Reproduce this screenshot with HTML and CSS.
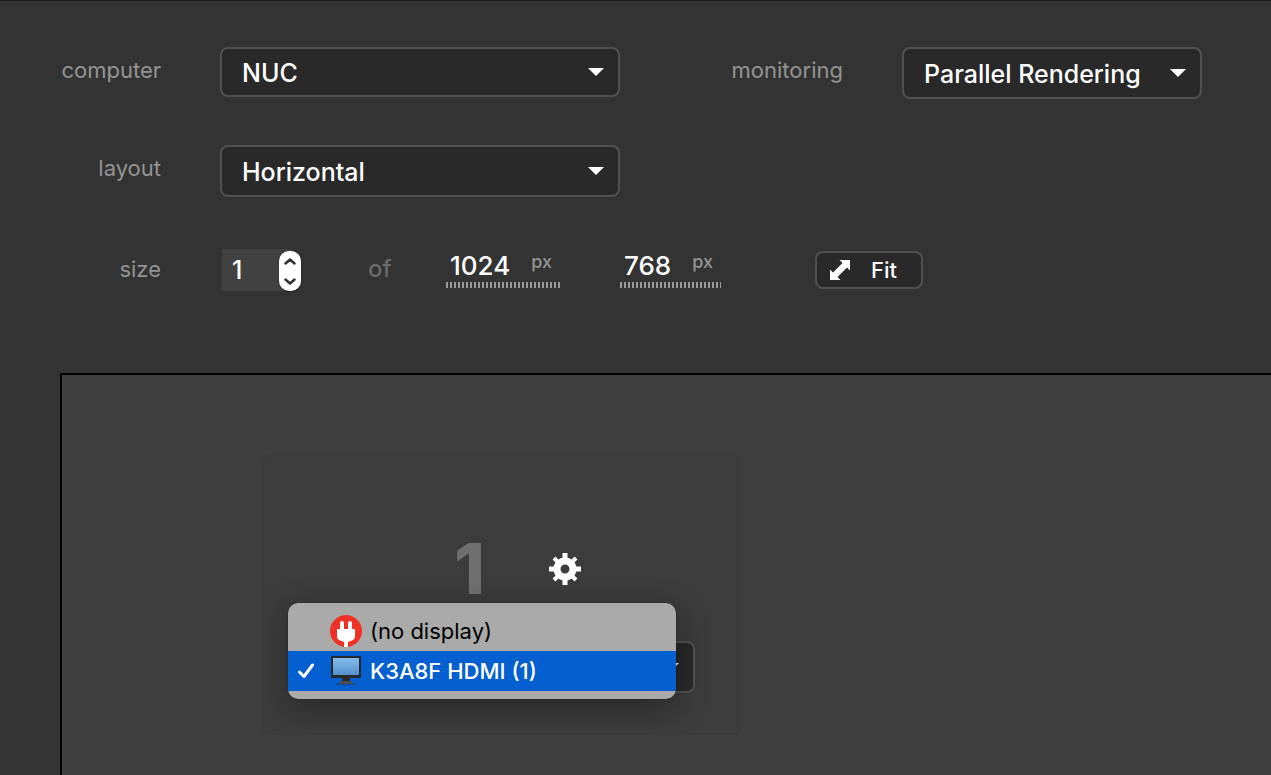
FILE: index.html
```html
<!DOCTYPE html>
<html lang="en">
<head>
<meta charset="utf-8">
<meta name="viewport" content="width=device-width, initial-scale=1">
<title>Display setup</title>
<link rel="stylesheet" href="styles.css">
</head>
<body>
<main class="page">
  <form class="settings">
    <div class="row">
      <label class="label" for="computer">computer</label>
      <div class="select select-wide select-short">
        <select id="computer"><option>NUC</option></select>
        <svg class="arrow" viewBox="0 0 16 8" aria-hidden="true"><path d="M0 0h16L8 8z"/></svg>
      </div>
      <label class="label label-second" for="monitoring">monitoring</label>
      <div class="select select-medium">
        <select id="monitoring"><option>Parallel Rendering</option></select>
        <svg class="arrow" viewBox="0 0 16 8" aria-hidden="true"><path d="M0 0h16L8 8z"/></svg>
      </div>
    </div>
    <div class="row">
      <label class="label" for="layout">layout</label>
      <div class="select select-wide">
        <select id="layout"><option>Horizontal</option></select>
        <svg class="arrow" viewBox="0 0 16 8" aria-hidden="true"><path d="M0 0h16L8 8z"/></svg>
      </div>
    </div>
    <div class="row row-size">
      <label class="label" for="count">size</label>
      <div class="stepper">
        <input id="count" type="number" value="1" min="1">
        <div class="spin">
          <button type="button" aria-label="Increase"><svg viewBox="0 0 12 7" aria-hidden="true"><path d="M1.500 5.500L6 1.500l4.500 4"/></svg></button>
          <button type="button" aria-label="Decrease"><svg viewBox="0 0 12 7" aria-hidden="true"><path d="M1.500 1.500L6 5.500l4.500-4"/></svg></button>
        </div>
      </div>
      <span class="of">of</span>
      <div class="measure measure-width">
        <input id="width" type="text" value="1024" aria-label="Width">
        <label for="width">px</label>
      </div>
      <div class="measure measure-height">
        <input id="height" type="text" value="768" aria-label="Height">
        <label for="height">px</label>
      </div>
      <button class="fit" type="button">
        <svg viewBox="0 0 22 22" aria-hidden="true"><path d="M10.500 1H21v10.500l-3-3L8.500 18l3 3H1V10.500l3 3L13.500 4z"/></svg>
        <span>Fit</span>
      </button>
    </div>
  </form>
  <section class="stage" aria-label="Displays">
    <article class="card">
      <header class="card-head">
        <span class="card-number">1</span>
        <button class="gear" type="button" aria-label="Display settings">
          <svg viewBox="-16 -16 32 32" aria-hidden="true">
            <path class="teeth" d="M0-16V-9M0 9v7M-16 0h7M9 0h7"/>
            <path class="teeth-diagonal" d="M-11-11l4 4M11 11l-4-4M-11 11l4-4M11-11l-4 4"/>
            <circle class="ring" r="8"/>
          </svg>
        </button>
      </header>
      <div class="select select-output">
        <select id="output" aria-label="Output"><option></option></select>
        <svg class="arrow" viewBox="0 0 16 8" aria-hidden="true"><path d="M0 0h16L8 8z"/></svg>
        <ul class="menu" role="listbox" aria-label="Output">
          <li class="option" role="option" aria-selected="false">
            <span class="tick"></span>
            <svg class="option-icon" viewBox="0 0 32 32" aria-hidden="true">
              <circle cx="16" cy="16" r="16" fill="#ee3124"/>
              <path fill="#fff" d="M10 14V8a2 2 0 0 1 4 0v6h4V8a2 2 0 0 1 4 0v6h3v8q0 2-3 3.500l-4 1.500V32h-4v-5L10 25.500Q7 24 7 22v-8z"/>
            </svg>
            <span>(no display)</span>
          </li>
          <li class="option option-selected" role="option" aria-selected="true">
            <span class="tick"><svg viewBox="0 0 16 16" aria-hidden="true"><path d="M1.500 9L6 13.500 14.500 2"/></svg></span>
            <svg class="option-icon" viewBox="0 0 32 32" aria-hidden="true">
              <defs><linearGradient id="screen" x2="0" y2="1"><stop stop-color="#86bcec"/><stop offset="1" stop-color="#5590cc"/></linearGradient></defs>
              <ellipse cx="16" cy="29" rx="11" ry="1.500" fill="#0b4ba3"/>
              <path d="M12 22h8v5h-8z" fill="#26282b"/>
              <path d="M11 26h10l3 3H8z" fill="#4a4d51"/>
              <rect x="1" y="1" width="30" height="22" rx="1" fill="#25282b"/>
              <rect x="3" y="3" width="26" height="17" fill="url(#screen)"/>
            </svg>
            <span>K3A8F HDMI (1)</span>
          </li>
        </ul>
      </div>
    </article>
  </section>
</main>
</body>
</html>
```
FILE: styles.css
```css
* {
  box-sizing: border-box;
}

body {
  margin: 0;
  background: #333;
  color: #fff;
  font-family: Inter, "Liberation Sans", sans-serif;
  font-size: 25px;
  font-weight: 500;
}

input,
select,
button {
  margin: 0;
  font: inherit;
  color: inherit;
}

.page {
  display: flex;
  flex-direction: column;
  min-height: 100vh;
  border-top: 1px solid #1a1a1a;
}

.settings {
  display: flex;
  flex-direction: column;
  gap: 46px;
  padding: 46px 60px 82px 0;
}

.row {
  display: flex;
  align-items: center;
}

.label {
  flex: none;
  width: 161px;
  margin-right: 59px;
  padding-bottom: 6px;
  color: #949494;
  font-size: 22px;
  font-weight: 400;
  line-height: 28px;
  text-align: right;
}

.label-second {
  width: 223px;
}

.select {
  position: relative;
}

.select select {
  display: block;
  width: 100%;
  height: 52px;
  padding: 2px 48px 0 20px;
  border: 2px solid #515151;
  border-radius: 8px;
  background: #292929;
  appearance: none;
}

.select-short {
  align-self: flex-start;
}

.select-short select {
  height: 50px;
}

.select-wide {
  width: 400px;
}

.select-medium {
  width: 300px;
}

.arrow {
  position: absolute;
  top: calc(50% - 4px);
  right: 16px;
  width: 16px;
  height: 8px;
  fill: #fff;
  pointer-events: none;
}

.row-size {
  padding-top: 6px;
}

.row-size .label {
  padding-bottom: 2px;
}

.stepper {
  position: relative;
  width: 79px;
  margin-left: 2px;
}

.stepper input {
  display: block;
  width: 70px;
  height: 42px;
  padding: 0 10px;
  border: 0;
  background: #414141;
  appearance: textfield;
}

.stepper input::-webkit-inner-spin-button {
  display: none;
}

.spin {
  position: absolute;
  top: 2px;
  right: 0;
  display: flex;
  flex-direction: column;
  width: 22px;
  height: 40px;
  border-radius: 10px;
  background: #fff;
  box-shadow: 0 1px 2px rgb(0 0 0 / 40%);
}

.spin button {
  display: flex;
  flex: 1;
  align-items: center;
  justify-content: center;
  padding: 0;
  border: 0;
  background: none;
}

.spin svg {
  width: 12px;
  height: 7px;
  fill: none;
  stroke: #333;
  stroke-width: 2.5;
  stroke-linecap: round;
  stroke-linejoin: round;
}

.of {
  width: 78px;
  margin-left: 67px;
  padding-bottom: 4px;
  color: #6b6b6b;
  font-size: 24px;
}

.measure {
  display: flex;
  height: 39px;
  margin-bottom: 3px;
  padding: 0 8px 6px 4px;
  background: repeating-linear-gradient(90deg, #999 0 2px, transparent 2px 4px) bottom / 100% 6px no-repeat;
}

.measure input {
  flex: 1;
  min-width: 0;
  padding: 0;
  border: 0;
  background: none;
  font-size: 26px;
}

.measure label {
  padding-top: 2px;
  color: #949494;
  font-size: 18px;
}

.measure-width {
  width: 114px;
}

.measure-height {
  width: 101px;
  margin-left: 60px;
}

.fit {
  display: flex;
  align-items: center;
  gap: 20px;
  width: 108px;
  height: 38px;
  margin-left: 94px;
  padding: 0 12px;
  border: 2px solid #515151;
  border-radius: 8px;
  background: #292929;
  font-size: 22px;
}

.fit svg {
  width: 22px;
  height: 22px;
  fill: #fff;
}

.stage {
  flex: 1;
  margin-left: 60px;
  padding: 80px 0 38px 200px;
  border: solid #000;
  border-width: 2px 0 0 2px;
  background: #3f3f3f;
}

.card {
  width: 480px;
  padding: 74px 46px 41px;
  border: 1px solid #3a3a3a;
  border-radius: 8px;
  background: #3c3c3c;
}

.card-head {
  display: flex;
  align-items: center;
  gap: 64px;
  height: 78px;
  margin-bottom: 33px;
  padding-left: 145px;
}

.card-number {
  color: #6f6f6f;
  font-size: 70px;
  font-weight: 800;
  line-height: 78px;
}

.gear {
  display: flex;
  padding: 0;
  border: 0;
  background: none;
}

.gear svg {
  width: 32px;
  height: 32px;
  fill: none;
  stroke: #fff;
}

.teeth {
  stroke-width: 5;
}

.teeth-diagonal {
  stroke-width: 4;
}

.ring {
  stroke-width: 7;
}

.menu {
  position: absolute;
  top: -38px;
  right: 19px;
  width: 388px;
  margin: 0;
  padding: 8px 0;
  border-radius: 10px;
  background: #aaa;
  box-shadow: 0 0 1px #000, 0 8px 30px rgb(0 0 0 / 35%);
  color: #000;
  font-size: 22px;
  font-weight: 400;
  list-style: none;
}

.option {
  display: flex;
  align-items: center;
  height: 40px;
  padding-left: 10px;
}

.option-selected {
  background: #0460d1;
  color: #fff;
  font-weight: 500;
}

.tick {
  display: flex;
  width: 32px;
}

.tick svg {
  width: 16px;
  height: 16px;
  fill: none;
  stroke: #fff;
  stroke-width: 3;
  stroke-linecap: round;
  stroke-linejoin: round;
}

.option-icon {
  width: 32px;
  height: 32px;
  margin-right: 8px;
}
```
